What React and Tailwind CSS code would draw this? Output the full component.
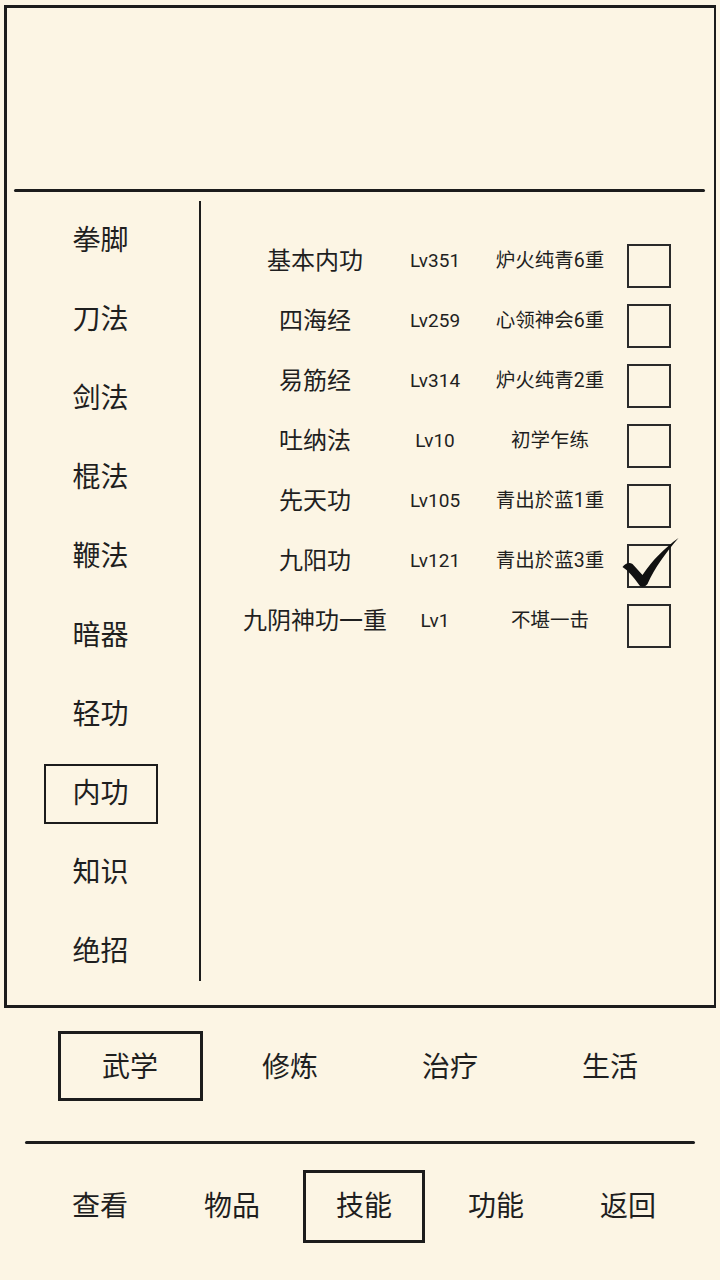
import React from 'react';

const categories = ['拳脚', '刀法', '剑法', '棍法', '鞭法', '暗器', '轻功', '内功', '知识', '绝招'];

const skills = [
  { name: '基本内功', lv: 'Lv351', rank: '炉火纯青6重', on: false },
  { name: '四海经', lv: 'Lv259', rank: '心领神会6重', on: false },
  { name: '易筋经', lv: 'Lv314', rank: '炉火纯青2重', on: false },
  { name: '吐纳法', lv: 'Lv10', rank: '初学乍练', on: false },
  { name: '先天功', lv: 'Lv105', rank: '青出於蓝1重', on: false },
  { name: '九阳功', lv: 'Lv121', rank: '青出於蓝3重', on: true },
  { name: '九阴神功一重', lv: 'Lv1', rank: '不堪一击', on: false },
];

const tabs = ['武学', '修炼', '治疗', '生活'];
const nav = ['查看', '物品', '技能', '功能', '返回'];

function Check() {
  return (
    <svg className="absolute left-[-7px] top-[-8px] w-[57px] h-[50px]" viewBox="0 0 56 50">
      <path
        d="M0 29 C3 25 7 24 10 26 L20 37 C30 22 42 10 56 0 C44 14 32 30 25 46 C23 49 18 50 16 46 C11 39 6 33 0 29 Z"
        fill="#111"
      />
    </svg>
  );
}

export default function App() {
  const activeCat = '内功';

  return (
    <div
      className="min-h-[1280px] w-[720px] bg-[#fcf5e4] text-[#1f1f1f] pt-[5px] overflow-hidden"
      style={{ fontFamily: "Roboto, 'Noto Sans CJK SC', sans-serif" }}
    >
      {/* main panel */}
      <div className="mx-[4px] h-[1003px] border-[3px] border-r-2 border-[#1c1c1c] flex flex-col">
        <div className="h-[181px]" />
        <div className="ml-[7px] mr-[9px] h-[3px] bg-[#1c1c1c] rounded-full" />

        <div className="flex flex-1">
          {/* category list */}
          <div className="w-[192px] pr-[5px] pt-[9px] flex flex-col items-center">
            {categories.map((c) => (
              <div key={c} className="h-[79px] flex items-center justify-center">
                {c === activeCat ? (
                  <div className="w-[114px] h-[60px] border-2 border-[#1c1c1c] flex items-center justify-center text-[28px]">
                    {c}
                  </div>
                ) : (
                  <span className="text-[28px]">{c}</span>
                )}
              </div>
            ))}
          </div>

          <div className="mt-[9px] w-[2px] h-[780px] bg-[#1c1c1c]" />

          {/* skill rows */}
          <div className="flex-1 pl-[34px] pt-[39px] flex flex-col">
            {skills.map((s) => (
              <div key={s.name} className="h-[60px] flex items-center">
                <div className="w-[160px] text-center text-[24px]">{s.name}</div>
                <div className="w-[80px] text-center text-[19px]">{s.lv}</div>
                <div className="w-[150px] text-center text-[19.5px]">{s.rank}</div>
                <div className="relative ml-[2px] mt-[10px] w-[44px] h-[44px] border-2 border-[#2a2a2a]">
                  {s.on && <Check />}
                </div>
              </div>
            ))}
          </div>
        </div>
      </div>

      {/* tabs */}
      <div className="mt-[23px] pl-[50px] flex">
        {tabs.map((t, i) => (
          <div key={t} className="w-[160px] h-[70px] flex items-center justify-center pt-[4px]">
            {i === 0 ? (
              <div className="-mt-[4px] w-[145px] h-[70px] border-[3px] border-[#1c1c1c] flex items-center justify-center pt-[4px] text-[28px]">
                {t}
              </div>
            ) : (
              <span className="text-[28px]">{t}</span>
            )}
          </div>
        ))}
      </div>

      <div className="mt-[40px] ml-[25px] w-[670px] h-[3px] bg-[#1c1c1c] rounded-full" />

      {/* bottom nav */}
      <div className="mt-[26px] pl-[34px] flex">
        {nav.map((n) => (
          <div key={n} className="w-[132px] h-[73px] flex items-center justify-center">
            {n === '技能' ? (
              <div className="w-[122px] h-[73px] border-[3px] border-[#1c1c1c] flex items-center justify-center text-[28px]">
                {n}
              </div>
            ) : (
              <span className="text-[28px]">{n}</span>
            )}
          </div>
        ))}
      </div>
    </div>
  );
}
